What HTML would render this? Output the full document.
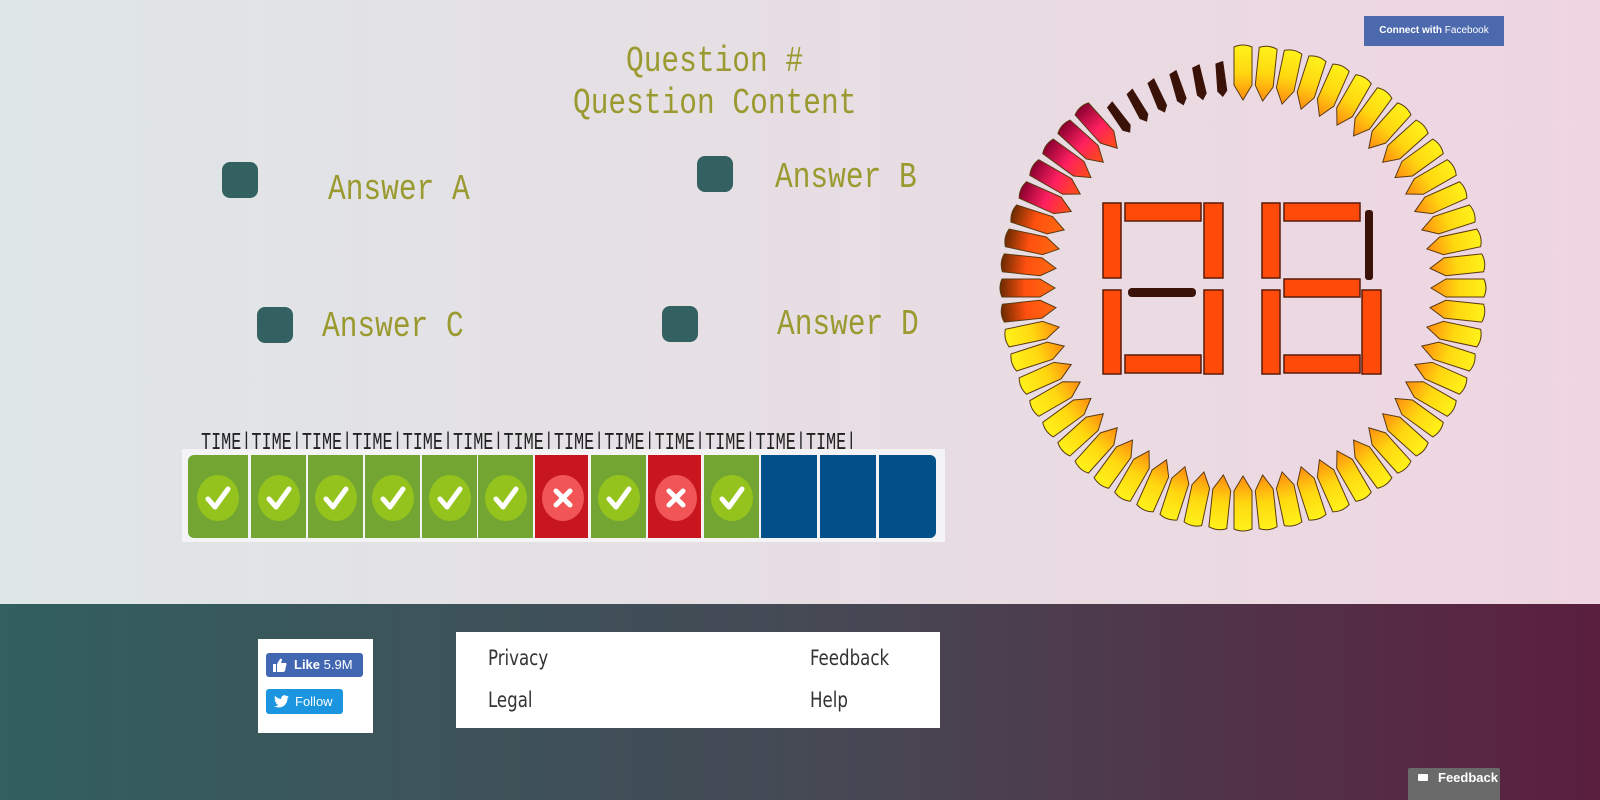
<!DOCTYPE html>
<html><head><meta charset="utf-8"><style>
*{margin:0;padding:0;box-sizing:border-box}
body{width:1600px;height:800px;overflow:hidden;position:relative;font-family:"Liberation Sans",sans-serif}
#top{position:absolute;left:0;top:0;width:1600px;height:604px;background:linear-gradient(90deg,#dfe6e8,#e6dfe4 45%,#efd5e1)}
#foot{position:absolute;left:0;top:604px;width:1600px;height:196px;background:linear-gradient(90deg,#325f5f,#454a55 50%,#5b1f3f)}
.m{position:absolute;font-family:"Liberation Mono",monospace;color:#9a9a30;font-size:36px;line-height:40px;white-space:nowrap;transform:scaleX(0.82);transform-origin:0 0}
.b{position:absolute;width:36px;height:36px;border-radius:8px;background:#336060}
.t{position:absolute;top:430px;font-family:"Liberation Mono",monospace;font-size:24px;color:#222;white-space:nowrap;transform:scaleX(0.7);transform-origin:0 0;letter-spacing:0}
#strip{position:absolute;left:182px;top:449px;width:763px;height:93px;background:#f4f4f6}
.c{position:absolute;top:455px;height:83px;width:55px}
.g{background:#72a532}.r{background:#c8161e}.bl{background:#02508a}
.ic{position:absolute;left:7px;top:20px;width:42px;height:46px;border-radius:50%}
.g .ic{background:#95c31e}.r .ic{background:#f25555}
.ic svg{position:absolute;left:0;top:0}
.fbc{position:absolute;left:1364px;top:16px;width:140px;height:30px;background:#4c69ae;color:#fff;font-size:10px;line-height:30px;text-align:center}
.w{position:absolute;background:#fff}
.lk{position:absolute;color:#333;font-size:21px;font-family:"DejaVu Sans Condensed","DejaVu Sans",sans-serif;transform:scaleX(0.88);transform-origin:0 0}
</style></head><body>
<div id="top"></div>
<div id="foot"></div>
<div class="m" style="left:626px;top:42px">Question #</div>
<div class="m" style="left:573px;top:84px">Question Content</div>
<div class="b" style="left:222px;top:162px"></div><div class="m" style="left:328px;top:170px">Answer A</div>
<div class="b" style="left:697px;top:156px"></div><div class="m" style="left:775px;top:158px">Answer B</div>
<div class="b" style="left:257px;top:307px"></div><div class="m" style="left:322px;top:307px">Answer C</div>
<div class="b" style="left:662px;top:306px"></div><div class="m" style="left:777px;top:305px">Answer D</div>

<div class="t" style="left:201px">TIME|TIME|TIME|TIME|TIME|TIME|TIME|TIME|TIME|TIME|TIME|TIME|TIME|</div>
<div id="strip"></div>
<svg width="0" height="0" style="position:absolute"><defs>
<symbol id="ck" viewBox="0 0 42 46"><path d="M11 24 L18 32 L31 14" stroke="#fff" stroke-width="5" fill="none" stroke-linecap="round" stroke-linejoin="round"/></symbol>
<symbol id="x" viewBox="0 0 42 46"><path d="M14 16 L28 30 M28 16 L14 30" stroke="#fff" stroke-width="5" fill="none" stroke-linecap="round"/></symbol>
</defs></svg>
<div class="c g" style="left:188px;width:60px;border-radius:6px 0 0 6px"><div class="ic" style="left:9px"><svg width="42" height="46"><use href="#ck"/></svg></div></div>
<div class="c g" style="left:251px"><div class="ic"><svg width="42" height="46"><use href="#ck"/></svg></div></div>
<div class="c g" style="left:308px"><div class="ic"><svg width="42" height="46"><use href="#ck"/></svg></div></div>
<div class="c g" style="left:365px"><div class="ic"><svg width="42" height="46"><use href="#ck"/></svg></div></div>
<div class="c g" style="left:422px"><div class="ic"><svg width="42" height="46"><use href="#ck"/></svg></div></div>
<div class="c g" style="left:478px"><div class="ic"><svg width="42" height="46"><use href="#ck"/></svg></div></div>
<div class="c r" style="left:535px;width:53px"><div class="ic"><svg width="42" height="46"><use href="#x"/></svg></div></div>
<div class="c g" style="left:591px"><div class="ic"><svg width="42" height="46"><use href="#ck"/></svg></div></div>
<div class="c r" style="left:648px;width:53px"><div class="ic"><svg width="42" height="46"><use href="#x"/></svg></div></div>
<div class="c g" style="left:704px"><div class="ic"><svg width="42" height="46"><use href="#ck"/></svg></div></div>
<div class="c bl" style="left:761px;width:56px"></div>
<div class="c bl" style="left:820px;width:56px"></div>
<div class="c bl" style="left:879px;width:57px;border-radius:0 6px 6px 0"></div>

<div class="fbc"><b>Connect with</b> Facebook</div>

<svg style="position:absolute;left:0;top:0" width="1600" height="604">
<defs>
<linearGradient id="gy" x1="0" y1="0" x2="0" y2="1"><stop offset="0" stop-color="#fff21a"/><stop offset="0.5" stop-color="#ffd810"/><stop offset="1" stop-color="#ff8a10"/></linearGradient>
<linearGradient id="gp" x1="0" y1="0" x2="0" y2="1"><stop offset="0" stop-color="#8a0030"/><stop offset="0.5" stop-color="#ff2060"/><stop offset="1" stop-color="#ff5010"/></linearGradient>
<linearGradient id="go" x1="0" y1="0" x2="0" y2="1"><stop offset="0" stop-color="#6a2a00"/><stop offset="0.45" stop-color="#ff5010"/><stop offset="1" stop-color="#ff6a10"/></linearGradient>
<path id="sg" d="M-9,-241 Q0,-245 9,-241 L9,-203 L0,-188 L-9,-203 Z" stroke="#5a3a10" stroke-width="1"/>
<path id="dk" d="M-4,-226 L4,-228 L5,-198 L0,-192 L-5,-198 Z" fill="#3a1208"/>
</defs>
<g transform="translate(1243,288)">
<g fill="url(#gy)">
<use href="#sg" transform="rotate(0)"/><use href="#sg" transform="rotate(6)"/><use href="#sg" transform="rotate(12)"/><use href="#sg" transform="rotate(18)"/><use href="#sg" transform="rotate(24)"/><use href="#sg" transform="rotate(30)"/><use href="#sg" transform="rotate(36)"/><use href="#sg" transform="rotate(42)"/><use href="#sg" transform="rotate(48)"/><use href="#sg" transform="rotate(54)"/><use href="#sg" transform="rotate(60)"/><use href="#sg" transform="rotate(66)"/><use href="#sg" transform="rotate(72)"/><use href="#sg" transform="rotate(78)"/><use href="#sg" transform="rotate(84)"/><use href="#sg" transform="rotate(90)"/><use href="#sg" transform="rotate(96)"/><use href="#sg" transform="rotate(102)"/><use href="#sg" transform="rotate(108)"/><use href="#sg" transform="rotate(114)"/><use href="#sg" transform="rotate(120)"/><use href="#sg" transform="rotate(126)"/><use href="#sg" transform="rotate(132)"/><use href="#sg" transform="rotate(138)"/><use href="#sg" transform="rotate(144)"/><use href="#sg" transform="rotate(150)"/><use href="#sg" transform="rotate(156)"/><use href="#sg" transform="rotate(162)"/><use href="#sg" transform="rotate(168)"/><use href="#sg" transform="rotate(174)"/><use href="#sg" transform="rotate(180)"/><use href="#sg" transform="rotate(186)"/><use href="#sg" transform="rotate(192)"/><use href="#sg" transform="rotate(198)"/><use href="#sg" transform="rotate(204)"/><use href="#sg" transform="rotate(210)"/><use href="#sg" transform="rotate(216)"/><use href="#sg" transform="rotate(222)"/><use href="#sg" transform="rotate(228)"/><use href="#sg" transform="rotate(234)"/><use href="#sg" transform="rotate(240)"/><use href="#sg" transform="rotate(246)"/><use href="#sg" transform="rotate(252)"/><use href="#sg" transform="rotate(258)"/>
</g>
<g fill="url(#go)">
<use href="#sg" transform="rotate(264)"/><use href="#sg" transform="rotate(270)"/><use href="#sg" transform="rotate(276)"/><use href="#sg" transform="rotate(282)"/><use href="#sg" transform="rotate(288)"/>
</g>
<g fill="url(#gp)">
<use href="#sg" transform="rotate(294)"/><use href="#sg" transform="rotate(300)"/><use href="#sg" transform="rotate(306)"/><use href="#sg" transform="rotate(312)"/><use href="#sg" transform="rotate(318)"/>
</g>
<use href="#dk" transform="rotate(324)"/><use href="#dk" transform="rotate(330)"/><use href="#dk" transform="rotate(336)"/><use href="#dk" transform="rotate(342)"/><use href="#dk" transform="rotate(348)"/><use href="#dk" transform="rotate(354)"/>
</g>
<g fill="#ff4a0a" stroke="#5a1a08" stroke-width="1.5">
<rect x="1103" y="203" width="18" height="75"/><rect x="1103" y="290" width="18" height="84"/>
<rect x="1125" y="203" width="76" height="18"/><rect x="1125" y="355" width="76" height="18"/>
<rect x="1204" y="203" width="19" height="75"/><rect x="1204" y="290" width="19" height="84"/>
<rect x="1262" y="203" width="18" height="75"/><rect x="1262" y="290" width="18" height="84"/>
<rect x="1284" y="203" width="76" height="18"/><rect x="1284" y="279" width="76" height="18"/><rect x="1284" y="355" width="76" height="18"/>
<rect x="1362" y="290" width="19" height="84"/>
</g>
<rect x="1128" y="288" width="68" height="9" rx="4" fill="#3a1208"/>
<rect x="1365" y="210" width="8" height="70" rx="3" fill="#3a1208"/>
</svg>

<div class="w" style="left:258px;top:639px;width:115px;height:94px"></div>
<div style="position:absolute;left:266px;top:653px;width:97px;height:24px;background:#4267b2;border-radius:3px;color:#fff;font-size:13px;line-height:24px;padding-left:28px"><svg style="position:absolute;left:6px;top:4px" width="16" height="16" viewBox="0 0 16 16"><path d="M1 7h3v8H1z M5 7 L8 2 Q10 1 10 3 L9 6 H14 Q15 7 14 9 L13 14 Q12 15 11 15 H5 Z" fill="#fff"/></svg><b>Like</b> 5.9M</div>
<div style="position:absolute;left:266px;top:689px;width:77px;height:25px;background:#1b95e0;border-radius:3px;color:#fff;font-size:13px;line-height:25px;padding-left:29px"><svg style="position:absolute;left:8px;top:6px" width="15" height="13" viewBox="0 0 24 20"><path d="M24 2.4a10 10 0 0 1-2.8.8A5 5 0 0 0 23.3.4a10 10 0 0 1-3.1 1.2A4.9 4.9 0 0 0 11.8 6 14 14 0 0 1 1.7.9a4.9 4.9 0 0 0 1.5 6.6A4.9 4.9 0 0 1 1 6.9a4.9 4.9 0 0 0 3.9 4.8 5 5 0 0 1-2.2.1 4.9 4.9 0 0 0 4.6 3.4A9.9 9.9 0 0 1 0 17.3 14 14 0 0 0 7.5 19.5c9 0 14-7.5 14-14v-.6A10 10 0 0 0 24 2.4z" fill="#fff"/></svg>Follow</div>

<div class="w" style="left:456px;top:632px;width:484px;height:96px"></div>
<div class="lk" style="left:488px;top:646px">Privacy</div>
<div class="lk" style="left:488px;top:688px">Legal</div>
<div class="lk" style="left:810px;top:646px">Feedback</div>
<div class="lk" style="left:810px;top:688px">Help</div>

<div style="position:absolute;left:1408px;top:768px;width:92px;height:32px;background:#6a6a6a;color:#fff;font-size:13px;font-weight:bold;line-height:20px;padding-left:30px;border-radius:2px 2px 0 0"><span style="position:absolute;left:10px;top:6px;width:10px;height:7px;background:#fff;border-radius:1px"></span>Feedback</div>
</body></html>
